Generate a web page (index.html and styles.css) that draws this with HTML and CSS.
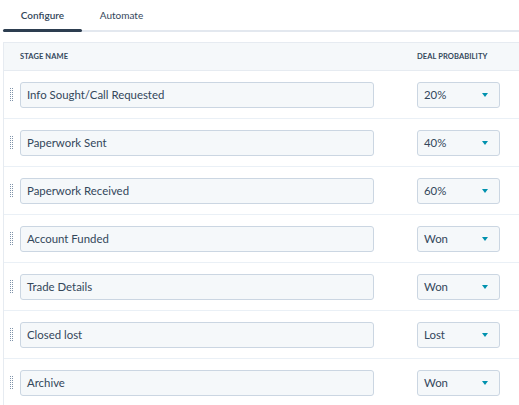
FILE: index.html
```html
<!DOCTYPE html>
<html>
<head>
<meta charset="utf-8">
<link rel="stylesheet" href="styles.css">
</head>
<body>
<div class="tabs">
  <div class="tab active">Configure</div>
  <div class="tab">Automate</div>
</div>
<div class="table">
  <div class="thead">
    <div class="col-name">STAGE NAME</div>
    <div class="col-prob">DEAL PROBABILITY</div>
  </div>
  <div class="row"><span class="grip"></span><div class="input">Info Sought/Call Requested</div><div class="select">20%<span class="caret"></span></div></div>
  <div class="row"><span class="grip"></span><div class="input">Paperwork Sent</div><div class="select">40%<span class="caret"></span></div></div>
  <div class="row"><span class="grip"></span><div class="input">Paperwork Received</div><div class="select">60%<span class="caret"></span></div></div>
  <div class="row"><span class="grip"></span><div class="input">Account Funded</div><div class="select">Won<span class="caret"></span></div></div>
  <div class="row"><span class="grip"></span><div class="input">Trade Details</div><div class="select">Won<span class="caret"></span></div></div>
  <div class="row"><span class="grip"></span><div class="input">Closed lost</div><div class="select">Lost<span class="caret"></span></div></div>
  <div class="row"><span class="grip"></span><div class="input">Archive</div><div class="select">Won<span class="caret"></span></div></div>
</div>
</body>
</html>
```
FILE: styles.css
```css
html, body {
  margin: 0;
  padding: 0;
  background: #fff;
  font-family: Lato, "Noto Sans", sans-serif;
  color: #33475b;
  overflow: hidden;
}
.tabs {
  display: flex;
  margin-left: 3px;
  height: 30px;
  border-bottom: 2px solid #e3e8ef;
}
.tab {
  position: relative;
  width: 79px;
  text-align: center;
  font-size: 10px;
  line-height: 30px;
  color: #33475b;
}
.tab.active {
  font-weight: 600;
}
.tab.active::after {
  content: "";
  position: absolute;
  left: 0;
  right: 0;
  bottom: -2px;
  height: 3px;
  border-radius: 2px;
  background: #2d3e50;
}
.table {
  margin-top: 10px;
  margin-left: 3px;
  border-left: 1px solid #e6ebf1;
  border-top: 1px solid #e6ebf1;
}
.thead {
  display: flex;
  align-items: center;
  height: 27px;
  background: #f5f8fa;
  border-bottom: 1px solid #e6ebf1;
  font-size: 7.5px;
  font-weight: 700;
  color: #33475b;
  letter-spacing: 0.1px;
}
.col-name {
  width: 397px;
  padding-left: 16px;
}
.row {
  display: flex;
  align-items: center;
  height: 47px;
  border-bottom: 1px solid #eaf0f6;
  padding-left: 5px;
}
.grip {
  width: 4px;
  height: 14px;
  background-image:
    linear-gradient(to right, #ffffff 1px, transparent 1px),
    linear-gradient(to bottom, #7f93aa 1px, #ffffff 1px);
  background-size: 2px 2px, 2px 2px;
}
.input, .select {
  box-sizing: border-box;
  height: 26px;
  background: #f5f8fa;
  border: 1px solid #cbd6e2;
  border-radius: 3px;
  font-size: 11.4px;
  line-height: 24px;
  padding-left: 6px;
  color: #33475b;
}
.input {
  width: 354px;
  margin-left: 7px;
}
.select {
  position: relative;
  width: 83px;
  margin-left: 43px;
}
.caret {
  position: absolute;
  right: 11px;
  top: 10px;
  width: 0;
  height: 0;
  border-left: 3.5px solid transparent;
  border-right: 3.5px solid transparent;
  border-top: 4px solid #0091ae;
}
```
